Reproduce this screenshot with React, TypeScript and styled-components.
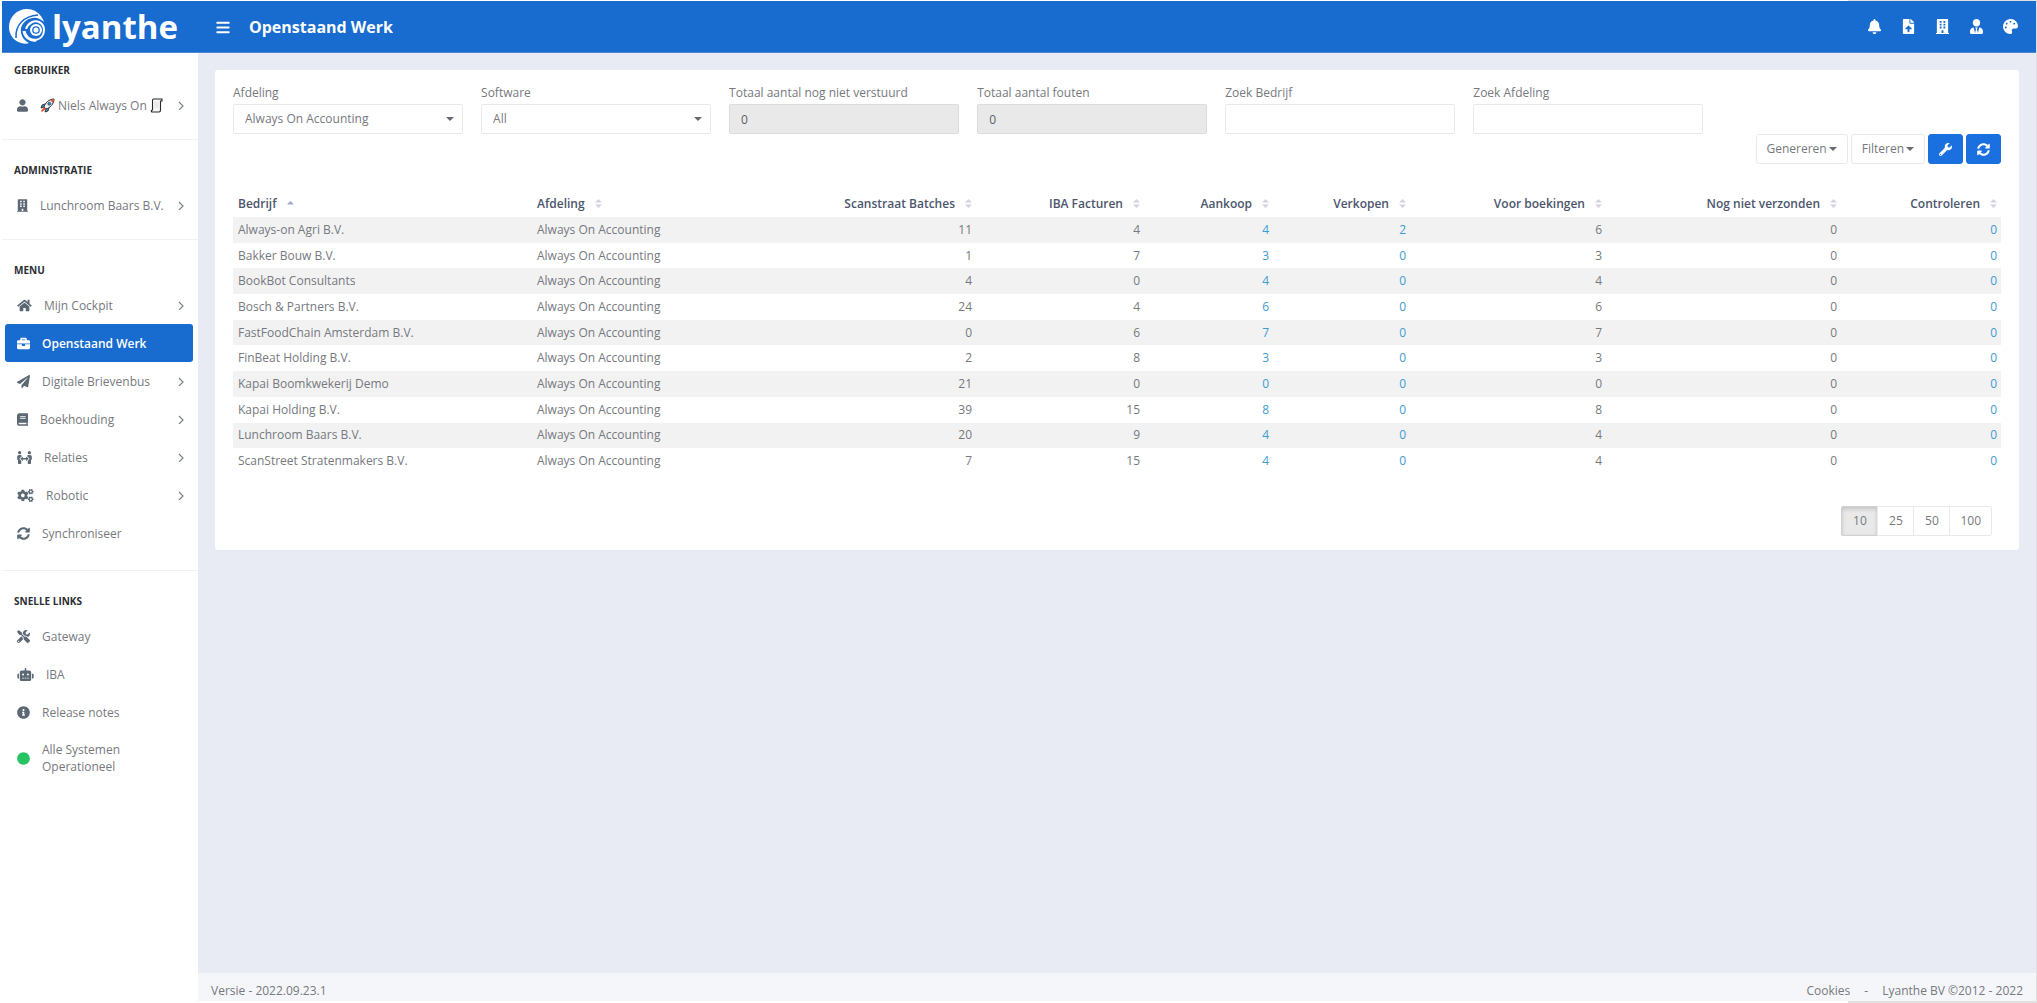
import React from "react";
import styled, { createGlobalStyle, css } from "styled-components";
import type { IconType } from "react-icons";
import {
  FaBars,
  FaBell,
  FaBook,
  FaBriefcase,
  FaBuilding,
  FaCircle,
  FaCogs,
  FaFileUpload,
  FaHome,
  FaInfoCircle,
  FaPalette,
  FaPaperPlane,
  FaPeopleArrows,
  FaRobot,
  FaSyncAlt,
  FaTools,
  FaUser,
  FaUserTie,
  FaWrench,
} from "react-icons/fa";

const colors = {
  brand: "#186bcf",
  button: "#1a70de",
  canvas: "#e8ebf3",
  text: "#76797e",
  icon: "#5c6873",
  heading: "#2b2e33",
  tableHead: "#4c566d",
  border: "#e9e9ea",
  link: "#3f9bd0",
};

const GlobalStyle = createGlobalStyle`
  *, *::before, *::after { box-sizing: border-box; }
  body {
    margin: 0;
    color: ${colors.text};
    font-family: "Open Sans", "Noto Sans", sans-serif;
    font-size: 12px;
    line-height: 18px;
  }
  button, input, select { font: inherit; color: inherit; margin: 0; }
  a { color: inherit; text-decoration: none; }
`;

const Page = styled.div`
  display: flex;
  flex-direction: column;
  min-height: 100vh;
  padding: 1px 1px 2px 2px;
  background: linear-gradient(to left, #e0e0e0 189px, #fff 189px);
`;

const Header = styled.header`
  display: flex;
  align-items: center;
  height: 52px;
  padding-right: 16px;
  background: ${colors.brand};
  border-bottom: 1px solid #4a88d0;
  color: #fff;
`;

const Brand = styled.a`
  display: flex;
  align-items: center;
  gap: 7px;
  width: 196px;
  padding-left: 7px;
  font-size: 33px;
  font-weight: 700;
  line-height: 44px;
`;

const PlainButton = styled.button`
  display: flex;
  align-items: center;
  justify-content: center;
  padding: 0;
  border: 0;
  background: none;
  cursor: pointer;
`;

const MenuToggle = styled(PlainButton)`
  width: 14px;
  margin-left: 18px;
  padding-top: 2px;
  font-size: 15px;
`;

const PageTitle = styled.h1`
  flex: 1;
  margin: 0 0 0 19px;
  font-size: 16px;
  line-height: 20px;
`;

const HeaderActions = styled.nav`
  display: flex;
  gap: 14px;
`;

const HeaderAction = styled(PlainButton)`
  width: 20px;
  height: 20px;
  font-size: 15px;
`;

const Body = styled.div`
  display: flex;
  flex: 1;
`;

const Sidebar = styled.aside`
  flex: 0 0 196px;
  background: #fff;
`;

const NavSection = styled.section`
  padding: 21px 0 15px;
  & + & { border-top: 1px solid #f0f1f3; }
  &:first-child { padding-top: 8px; }
  &:nth-child(3) { padding-bottom: 18px; }
`;

const NavTitle = styled.h2`
  margin: 0 12px 7px;
  color: ${colors.heading};
  font-size: 10px;
  line-height: 18px;
  font-weight: 700;
  text-transform: uppercase;
`;

const NavLink = styled.a<{ $active?: boolean }>`
  display: flex;
  align-items: center;
  gap: 12px;
  min-height: 38px;
  margin: 0 5px 0 3px;
  padding: 10px 9px 10px 12px;
  border-radius: 3px;
  line-height: 17px;
  ${(p) =>
    p.$active &&
    css`
      background: ${colors.brand};
      color: #fff;
      font-weight: 600;
    `}
`;

const NavIcon = styled.span<{ $active?: boolean; $color?: string; $width?: number }>`
  display: flex;
  font-size: 13px;
  color: ${(p) => (p.$active ? "#fff" : p.$color ?? colors.icon)};
  svg { width: ${(p) => p.$width ?? 13}px; }
`;

const NavText = styled.span`
  display: flex;
  align-items: center;
  gap: 3px;
  flex: 1;
  white-space: pre-line;
`;

const Main = styled.div`
  display: flex;
  flex: 1;
  min-width: 0;
  flex-direction: column;
  background: ${colors.canvas};
`;

const Content = styled.main`
  flex: 1;
  padding: 17px;
`;

const Card = styled.section`
  padding: 14px 18px;
  border-radius: 3px;
  background: #fff;
`;

const Filters = styled.form`
  display: grid;
  grid-template-columns: repeat(6, 1fr);
  gap: 18px;
  width: calc((100% + 18px) * 10 / 12 - 18px);
`;

const Field = styled.div`
  display: flex;
  flex-direction: column;
  gap: 2px;
`;

const control = css`
  width: 100%;
  height: 30px;
  padding: 0 11px;
  border: 1px solid ${colors.border};
  border-radius: 2px;
  background: #fff;
  outline: 0;
`;

const TextInput = styled.input`
  ${control}
  &:read-only {
    border-color: #dcdcdc;
    background: #e9e9e9;
    color: #5c5f63;
  }
`;

const SelectWrap = styled.div`
  position: relative;
`;

const Select = styled.select`
  ${control}
  appearance: none;
`;

const Caret = styled.span`
  width: 0;
  height: 0;
  border: solid transparent;
  border-width: 4px 4px 0;
  border-top-color: #666a70;
`;

const SelectCaret = styled(Caret)`
  position: absolute;
  top: 13px;
  right: 9px;
  pointer-events: none;
`;

const Toolbar = styled.div`
  display: flex;
  justify-content: flex-end;
  gap: 3px;
`;

const ToolButton = styled.button<{ $primary?: boolean }>`
  display: flex;
  align-items: center;
  justify-content: center;
  gap: 2px;
  height: 30px;
  padding: 0 10px;
  border: 1px solid ${colors.border};
  border-radius: 3px;
  background: #fff;
  cursor: pointer;
  ${(p) =>
    p.$primary &&
    css`
      width: 35px;
      padding: 0;
      border-color: ${colors.button};
      background: ${colors.button};
      color: #fff;
      font-size: 13px;
    `}
`;

const Table = styled.table`
  width: 100%;
  height: 284px;
  margin-top: 26px;
  border-collapse: collapse;
  table-layout: fixed;
`;

const HeadCell = styled.th<{ $numeric?: boolean }>`
  height: 27px;
  padding: 0 4px 0 5px;
  color: ${colors.tableHead};
  font-weight: 600;
  text-align: ${(p) => (p.$numeric ? "right" : "left")};
  white-space: nowrap;
`;

const SortButton = styled(PlainButton)`
  display: inline-flex;
  gap: 10px;
`;

const Row = styled.tr`
  &:nth-child(odd) { background: #f2f2f3; }
`;

const Cell = styled.td<{ $numeric?: boolean }>`
  padding: 0 4px 0 5px;
  text-align: ${(p) => (p.$numeric ? "right" : "left")};
  white-space: nowrap;
`;

const CellLink = styled.a`
  color: ${colors.link};
`;

const Pagination = styled.div`
  display: flex;
  justify-content: flex-end;
  margin-top: 32px;
  padding-right: 9px;
`;

const PageSize = styled.button<{ $active?: boolean }>`
  min-width: 37px;
  height: 30px;
  padding: 0 10px;
  border: 1px solid ${colors.border};
  background: #fff;
  cursor: pointer;
  & + & { margin-left: -1px; }
  &:first-child { border-radius: 2px 0 0 2px; }
  &:last-child { border-radius: 0 2px 2px 0; }
  ${(p) =>
    p.$active &&
    css`
      border-color: #cfcfcf;
      background: #e9e9e9;
      box-shadow: inset 0 2px 4px rgba(0, 0, 0, 0.16);
    `}
`;

const Footer = styled.footer`
  display: flex;
  justify-content: space-between;
  height: 28px;
  padding: 9px 13px 0;
  background: #f5f6f9;
`;

const FooterLinks = styled.div`
  display: flex;
  gap: 14px;
`;

function BrandMark() {
  return (
    <svg width="36" height="35" viewBox="0 0 36 35" aria-hidden="true">
      <path
        fill="#fff"
        d="M35 13C32 4 25 0 18 0 8 0 0 8 0 18c0 8 5 14 12 16 3 1 6 1 8 0-6-3-9-9-8-15 2-7 9-11 16-10 3 1 5 2 7 4Z"
      />
      <path fill="none" stroke={colors.brand} strokeWidth="1.5" d="M7 29C6 16 15 7 29 6" />
      <path fill="none" stroke="#fff" strokeWidth="2" d="M17 20c2-6 8-9 13-7 4 2 5 5 5 8 0 5-3 9-8 10" />
      <path fill="none" stroke="#fff" strokeWidth="3" d="M15 22c1 6 6 10 12 9" />
      <circle cx="27" cy="21" r="6" fill="#fff" />
      <circle cx="27" cy="21" r="3.2" fill="none" stroke={colors.brand} strokeWidth="1.3" />
    </svg>
  );
}

function Rocket() {
  return (
    <svg width="15" height="15" viewBox="0 0 15 15" aria-hidden="true">
      <path fill="#2f8fd0" stroke="#222" strokeWidth=".8" d="M5 6 2 7 1 10l3-1M9 10l-1 3-3 1 1-3" />
      <path fill="#eef2f5" stroke="#222" d="M4 9C5 5 9 1 14 1c0 5-4 9-8 10Z" />
      <path fill="#e05337" d="m10 2 4-1-1 4Z" />
      <circle cx="9.3" cy="5.7" r="1.5" fill="#2f8fd0" stroke="#222" strokeWidth=".6" />
      <path fill="#e9542f" d="m4 9 2 2-4 3-1-1Z" />
    </svg>
  );
}

function Scroll() {
  return (
    <svg width="13" height="15" viewBox="0 0 13 15" aria-hidden="true">
      <path
        fill="#f6f6f6"
        stroke="#2b2b2b"
        strokeWidth="1.1"
        d="M3.5 1H12v2h-1.5v9c0 1-.5 2-1.5 2H2c-1 0-1-2 0-2h.5V2.500C2.500 1.500 3 1 3.500 1Z"
      />
      <path stroke="#d4d4d4" strokeWidth=".7" d="M4.500 5h4M4.500 7h4M4.500 9h4" />
    </svg>
  );
}

function Chevron() {
  return (
    <svg width="6" height="10" viewBox="0 0 6 10" aria-hidden="true">
      <path fill="none" stroke="#7b8086" strokeWidth="1.2" d="m1 2 4 4-4 4" />
    </svg>
  );
}

function SortMark({ ascending }: { ascending?: boolean }) {
  return (
    <svg width="7" height="9" viewBox="0 0 7 9" aria-hidden="true">
      {ascending ? (
        <path fill="#a3a6cc" d="M0 5.500 3.500 2 7 5.500Z" />
      ) : (
        <path fill="#d3d3e4" d="M0 3.500 3.500 0 7 3.500ZM0 5.500 3.500 9 7 5.500Z" />
      )}
    </svg>
  );
}

type NavEntry = {
  label: React.ReactNode;
  icon: IconType;
  iconWidth?: number;
  color?: string;
  active?: boolean;
  expandable?: boolean;
};

const sections: { title: string; items: NavEntry[] }[] = [
  {
    title: "Gebruiker",
    items: [
      {
        label: (
          <>
            <Rocket />
            Niels Always On
            <Scroll />
          </>
        ),
        icon: FaUser,
        iconWidth: 11,
        expandable: true,
      },
    ],
  },
  {
    title: "Administratie",
    items: [
      { label: "Lunchroom Baars B.V.", icon: FaBuilding, iconWidth: 11, expandable: true },
    ],
  },
  {
    title: "Menu",
    items: [
      { label: "Mijn Cockpit", icon: FaHome, iconWidth: 15, expandable: true },
      { label: "Openstaand Werk", icon: FaBriefcase, active: true },
      { label: "Digitale Brievenbus", icon: FaPaperPlane, expandable: true },
      { label: "Boekhouding", icon: FaBook, iconWidth: 11, expandable: true },
      { label: "Relaties", icon: FaPeopleArrows, iconWidth: 15, expandable: true },
      { label: "Robotic", icon: FaCogs, iconWidth: 17, expandable: true },
      { label: "Synchroniseer", icon: FaSyncAlt },
    ],
  },
  {
    title: "Snelle links",
    items: [
      { label: "Gateway", icon: FaTools },
      { label: "IBA", icon: FaRobot, iconWidth: 17 },
      { label: "Release notes", icon: FaInfoCircle },
      { label: "Alle Systemen\nOperationeel", icon: FaCircle, color: "#26c363" },
    ],
  },
];

const headerActions: { label: string; icon: IconType }[] = [
  { label: "Meldingen", icon: FaBell },
  { label: "Uploaden", icon: FaFileUpload },
  { label: "Administratie", icon: FaBuilding },
  { label: "Gebruiker", icon: FaUserTie },
  { label: "Thema", icon: FaPalette },
];

// Widths are proportional: the fixed table layout scales them to the card.
const columns = [
  { title: "Bedrijf", width: 299 },
  { title: "Afdeling", width: 238 },
  { title: "Scanstraat Batches", width: 206 },
  { title: "IBA Facturen", width: 168 },
  { title: "Aankoop", width: 129, link: true },
  { title: "Verkopen", width: 137, link: true },
  { title: "Voor boekingen", width: 196 },
  { title: "Nog niet verzonden", width: 235 },
  { title: "Controleren", width: 160, link: true },
];

const rows: [string, ...number[]][] = [
  ["Always-on Agri B.V.", 11, 4, 4, 2, 6, 0, 0],
  ["Bakker Bouw B.V.", 1, 7, 3, 0, 3, 0, 0],
  ["BookBot Consultants", 4, 0, 4, 0, 4, 0, 0],
  ["Bosch & Partners B.V.", 24, 4, 6, 0, 6, 0, 0],
  ["FastFoodChain Amsterdam B.V.", 0, 6, 7, 0, 7, 0, 0],
  ["FinBeat Holding B.V.", 2, 8, 3, 0, 3, 0, 0],
  ["Kapai Boomkwekerij Demo", 21, 0, 0, 0, 0, 0, 0],
  ["Kapai Holding B.V.", 39, 15, 8, 0, 8, 0, 0],
  ["Lunchroom Baars B.V.", 20, 9, 4, 0, 4, 0, 0],
  ["ScanStreet Stratenmakers B.V.", 7, 15, 4, 0, 4, 0, 0],
];

function SelectField({ id, label, options }: { id: string; label: string; options: string[] }) {
  return (
    <Field>
      <label htmlFor={id}>{label}</label>
      <SelectWrap>
        <Select id={id}>
          {options.map((option) => (
            <option key={option}>{option}</option>
          ))}
        </Select>
        <SelectCaret />
      </SelectWrap>
    </Field>
  );
}

function InputField({ id, label, value }: { id: string; label: string; value?: string }) {
  return (
    <Field>
      <label htmlFor={id}>{label}</label>
      <TextInput id={id} defaultValue={value} readOnly={value !== undefined} />
    </Field>
  );
}

export default function App() {
  return (
    <Page>
      <GlobalStyle />
      <Header>
        <Brand href="#">
          <BrandMark />
          lyanthe
        </Brand>
        <MenuToggle type="button" aria-label="Menu">
          <FaBars />
        </MenuToggle>
        <PageTitle>Openstaand Werk</PageTitle>
        <HeaderActions>
          {headerActions.map(({ label, icon: Icon }) => (
            <HeaderAction key={label} type="button" aria-label={label}>
              <Icon />
            </HeaderAction>
          ))}
        </HeaderActions>
      </Header>
      <Body>
        <Sidebar>
          {sections.map((section) => (
            <NavSection key={section.title}>
              <NavTitle>{section.title}</NavTitle>
              {section.items.map(
                ({ label, icon: Icon, iconWidth, color, active, expandable }, i) => (
                  <NavLink key={i} href="#" $active={active}>
                    <NavIcon $active={active} $color={color} $width={iconWidth}>
                      <Icon />
                    </NavIcon>
                    <NavText>{label}</NavText>
                    {expandable && <Chevron />}
                  </NavLink>
                ),
              )}
            </NavSection>
          ))}
        </Sidebar>
        <Main>
          <Content>
            <Card>
              <Filters>
                <SelectField id="department" label="Afdeling" options={["Always On Accounting"]} />
                <SelectField id="software" label="Software" options={["All"]} />
                <InputField id="unsent" label="Totaal aantal nog niet verstuurd" value="0" />
                <InputField id="errors" label="Totaal aantal fouten" value="0" />
                <InputField id="find-company" label="Zoek Bedrijf" />
                <InputField id="find-department" label="Zoek Afdeling" />
              </Filters>
              <Toolbar>
                <ToolButton type="button">
                  Genereren <Caret />
                </ToolButton>
                <ToolButton type="button">
                  Filteren <Caret />
                </ToolButton>
                <ToolButton type="button" $primary aria-label="Instellingen">
                  <FaWrench />
                </ToolButton>
                <ToolButton type="button" $primary aria-label="Vernieuwen">
                  <FaSyncAlt />
                </ToolButton>
              </Toolbar>
              <Table>
                <colgroup>
                  {columns.map((column) => (
                    <col key={column.title} width={column.width} />
                  ))}
                </colgroup>
                <thead>
                  <tr>
                    {columns.map((column, i) => (
                      <HeadCell key={column.title} $numeric={i > 1} scope="col">
                        <SortButton type="button">
                          {column.title}
                          <SortMark ascending={i === 0} />
                        </SortButton>
                      </HeadCell>
                    ))}
                  </tr>
                </thead>
                <tbody>
                  {rows.map(([company, ...counts]) => (
                    <Row key={company}>
                      <Cell>{company}</Cell>
                      <Cell>Always On Accounting</Cell>
                      {counts.map((count, i) => (
                        <Cell key={i} $numeric>
                          {columns[i + 2].link ? <CellLink href="#">{count}</CellLink> : count}
                        </Cell>
                      ))}
                    </Row>
                  ))}
                </tbody>
              </Table>
              <Pagination>
                {[10, 25, 50, 100].map((size) => (
                  <PageSize key={size} type="button" $active={size === 10}>
                    {size}
                  </PageSize>
                ))}
              </Pagination>
            </Card>
          </Content>
          <Footer>
            <span>Versie - 2022.09.23.1</span>
            <FooterLinks>
              <a href="#">Cookies</a>
              <span>-</span>
              <span>Lyanthe BV ©2012 - 2022</span>
            </FooterLinks>
          </Footer>
        </Main>
      </Body>
    </Page>
  );
}
